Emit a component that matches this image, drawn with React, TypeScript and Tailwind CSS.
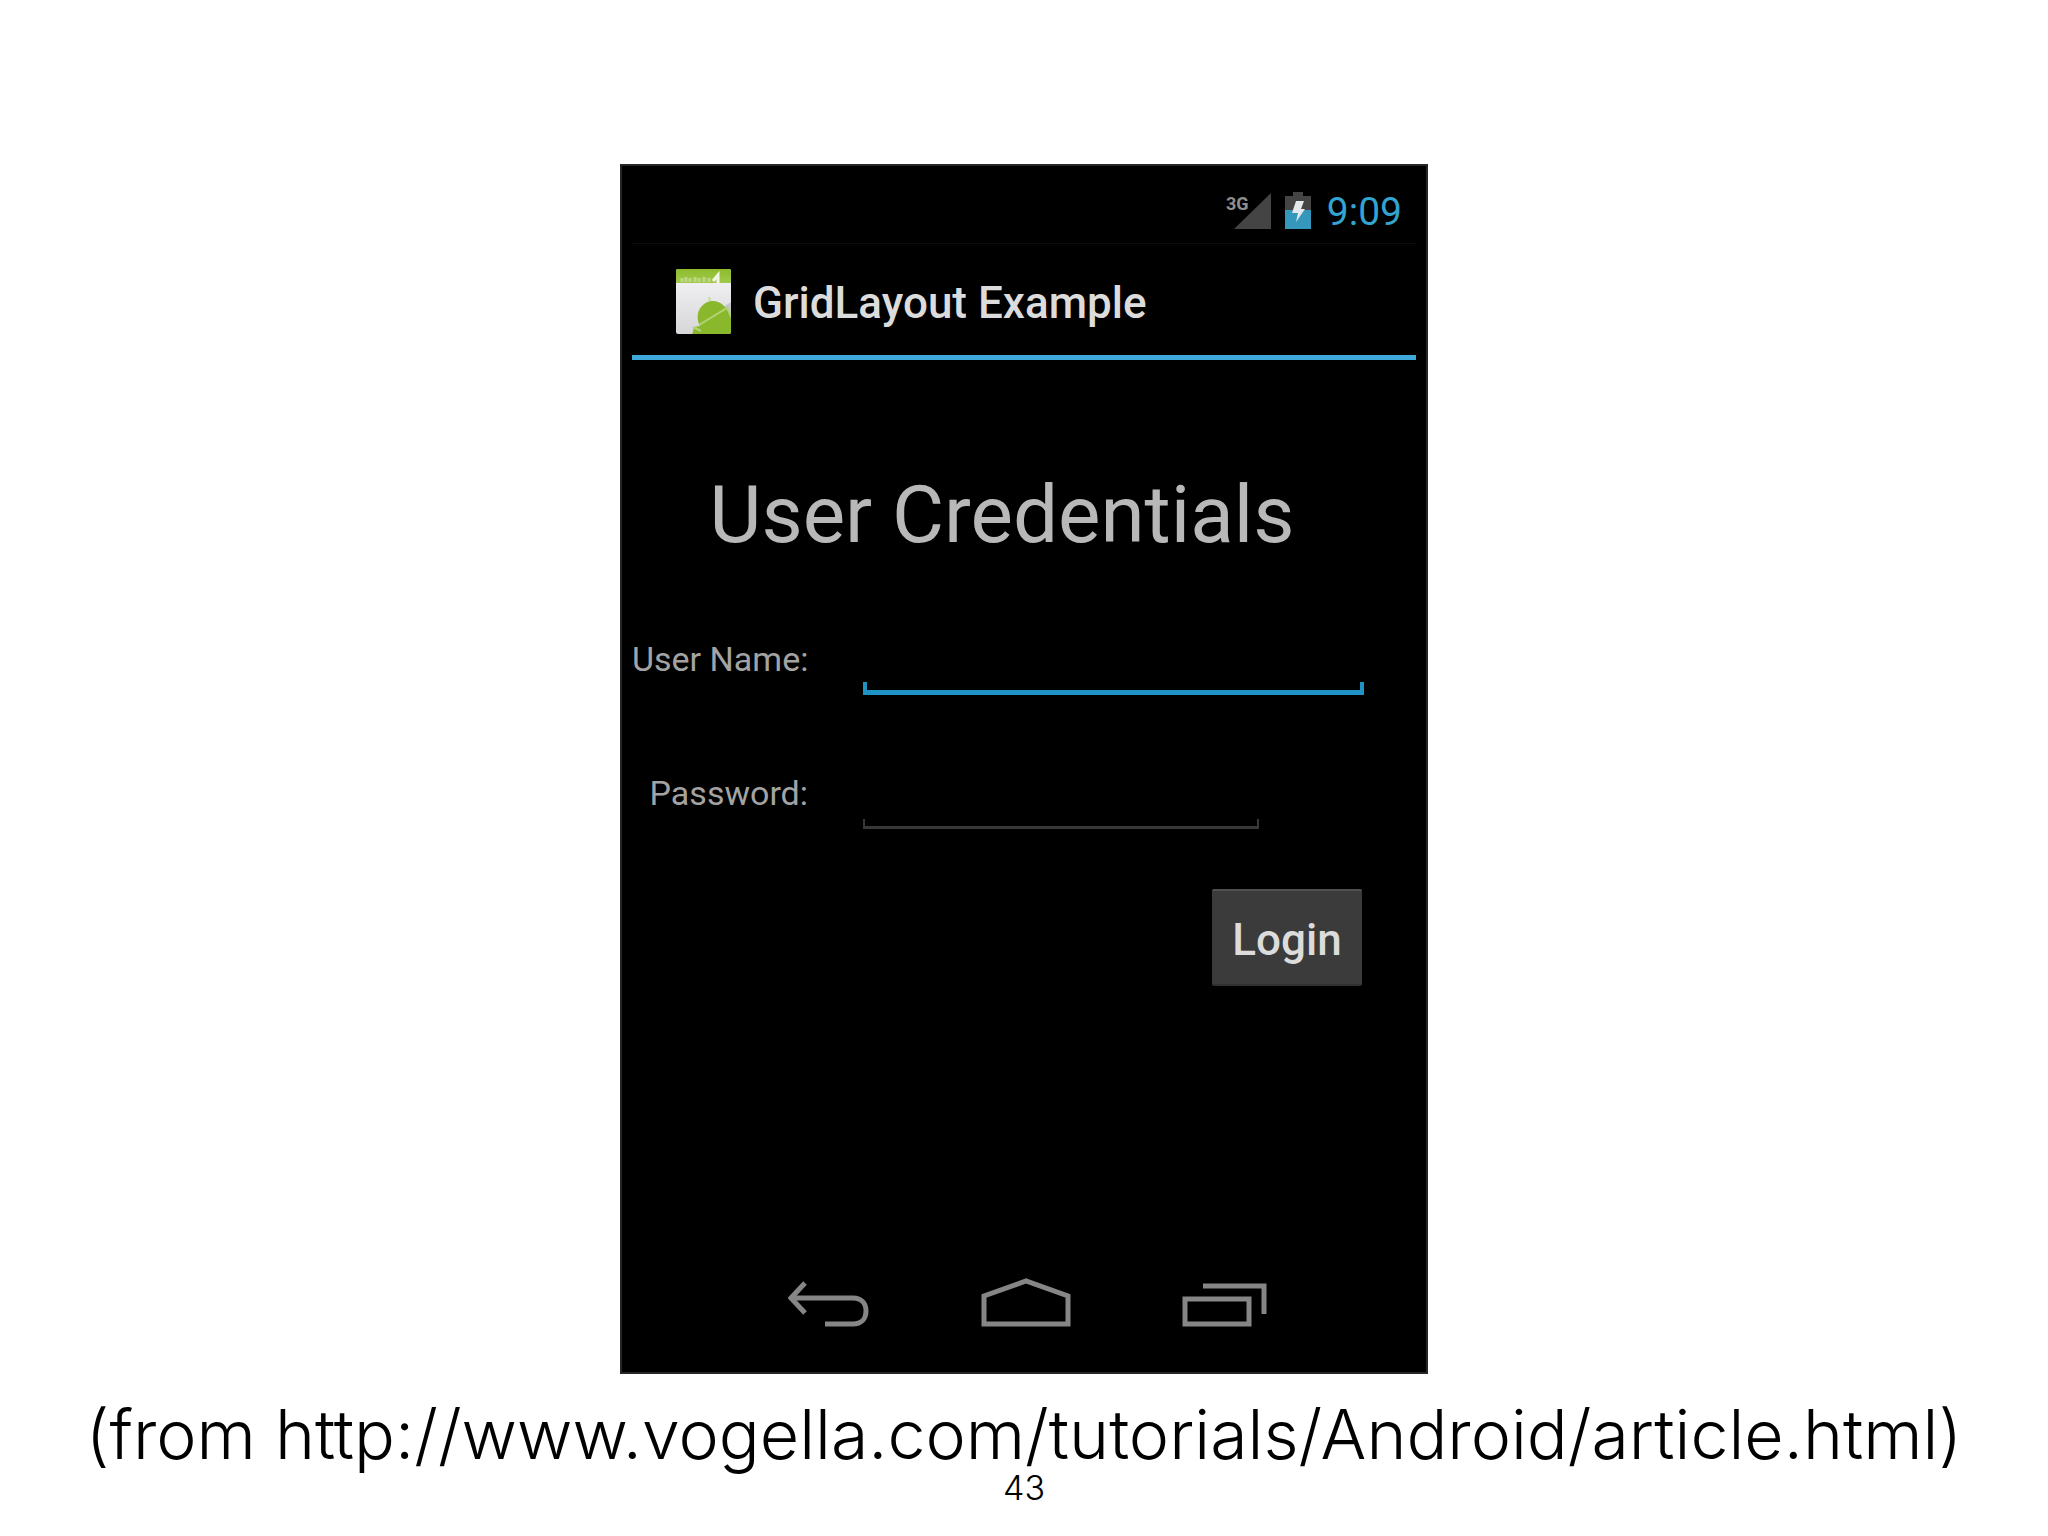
import React from "react";

function SignalIcon() {
  return (
    <svg width="48" height="40" viewBox="0 0 48 40" role="img" aria-label="3G signal">
      <path d="M46 1V37H9Z" fill="#444" />
      <text x="1" y="18" fill="#8f8f8f" fontFamily="Roboto, sans-serif" fontWeight="700" fontSize="18">
        3G
      </text>
    </svg>
  );
}

function BatteryIcon() {
  return (
    <svg width="26" height="40" viewBox="0 0 26 40" role="img" aria-label="Battery charging">
      <path d="M8 0H18V4H26V19H0V4H8Z" fill="#444" />
      <path d="M0 18H26V37H0Z" fill="#3597bb" />
      <path d="M11 9L19 9L16 17L20 17L11 30L13 21L7 21Z" fill="#e4e8ea" />
    </svg>
  );
}

function AppIcon() {
  return (
    <svg width="55" height="66" viewBox="0 0 55 66" aria-hidden="true">
      <defs>
        <linearGradient id="paper" x1="0" y1="0" x2="0" y2="1">
          <stop offset="0" stopColor="#f6f5f8" />
          <stop offset="1" stopColor="#d6d6d8" />
        </linearGradient>
        <linearGradient id="band" x1="0" y1="0" x2="0" y2="1">
          <stop offset="0" stopColor="#8dbb2c" />
          <stop offset="1" stopColor="#a2c94f" />
        </linearGradient>
        <clipPath id="card">
          <rect width="55" height="65" rx="2" />
        </clipPath>
      </defs>
      <g clipPath="url(#card)">
        <rect width="55" height="66" fill="url(#paper)" />
        <rect width="55" height="14" fill="url(#band)" />
        <path d="M6 13V9M10 13V8M14 13V9M19 13V8M23 13V9M28 13V8M33 13V9" stroke="#bcd882" strokeWidth="3" />
        <path d="M37 12L42 6V14" stroke="#f2f7e4" strokeWidth="3" fill="none" />
        <path d="M47 38L55 33V48Z" fill="#c6c6ca" />
        <path d="M16 66L18 58L24 57C18 46 24 34 35 32C44 31 48 37 51 40L55 49V66Z" fill="#8ab82d" />
        <path d="M23 56L51 39L55 47" stroke="#b3d274" strokeWidth="2" fill="none" />
        <path d="M34 32L33 28" stroke="#c9dc9f" strokeWidth="2" />
        <path d="M17 58L25 62" stroke="#b3d274" strokeWidth="2" />
      </g>
    </svg>
  );
}

function BackIcon() {
  return (
    <svg width="82" height="50" viewBox="0 0 82 50" fill="none" stroke="#868686" strokeWidth="5" aria-hidden="true">
      <path d="M3 20H65C74 20 78 26 78 33C78 41 73 46 65 46H37" />
      <path d="M17 5L3 20L17 35" />
    </svg>
  );
}

function HomeIcon() {
  return (
    <svg width="90" height="50" viewBox="0 0 90 50" fill="none" stroke="#868686" strokeWidth="5" aria-hidden="true">
      <path d="M3 46V18L45 3L87 18V46Z" />
    </svg>
  );
}

function RecentsIcon() {
  return (
    <svg width="86" height="50" viewBox="0 0 86 50" fill="none" stroke="#868686" strokeWidth="5" aria-hidden="true">
      <path d="M3 21H67V46H3Z" />
      <path d="M21 8H82V36" />
    </svg>
  );
}

function Phone() {
  return (
    <main className="w-full max-w-[808px] border-2 border-[#262626] bg-black font-['Roboto',sans-serif]">
      <div className="mx-2.5">
        <div className="flex h-[78px] items-center justify-end border-b border-[#0d0d0d] pt-3.5 pr-3.5">
          <SignalIcon />
          <span className="ml-3 flex">
            <BatteryIcon />
          </span>
          <time className="ml-4 text-[39px] leading-[48px] text-[#33a3cf]">9:09</time>
        </div>
        <header className="flex h-[116px] items-center gap-[22px] border-b-5 border-[#3fa9db] pt-1 pl-11">
          <AppIcon />
          <p className="pt-0.5 text-[44px] leading-[48px] font-medium text-[#dcdcdc]">GridLayout Example</p>
        </header>
      </div>

      <form className="mt-[115px] pr-[54px] pl-2.5" onSubmit={(e) => e.preventDefault()}>
        <h1 className="text-center text-[80px] leading-[80px] text-[#b8b8b8]">User Credentials</h1>
        <div className="mt-[68px] grid grid-cols-[176px_1fr] gap-x-[55px] gap-y-[62px] pr-2">
          <label htmlFor="user" className="self-center text-right text-[34px] leading-[40px] whitespace-nowrap text-[#a3a3a3]">
            User Name:
          </label>
          <div className="flex h-[72px] flex-col">
            <input id="user" type="text" className="min-h-0 w-full flex-1 bg-transparent px-3 text-[34px] text-[#dcdcdc] outline-none" />
            <div className="h-[13px] border-x-4 border-b-5 border-[#1e93c4]" />
          </div>
          <label htmlFor="pass" className="self-center text-right text-[34px] leading-[40px] whitespace-nowrap text-[#a3a3a3]">
            Password:
          </label>
          <div className="mr-[105px] flex h-[72px] flex-col">
            <input id="pass" type="password" className="min-h-0 w-full flex-1 bg-transparent px-3 text-[34px] text-[#dcdcdc] outline-none" />
            <div className="h-2.5 border-x-2 border-b-3 border-[#383838]" />
          </div>
        </div>
        <div className="mt-[60px] flex justify-end pr-2.5">
          <button
            type="submit"
            className="h-[97px] w-[150px] rounded-xs border-t-2 border-b-2 border-t-[#505050] border-b-[#303030] bg-[#3b3b3b] pt-1 text-[44px] leading-[48px] font-medium text-[#dcdcdc]"
          >
            Login
          </button>
        </div>
      </form>

      <nav className="mt-[292px] flex items-end justify-center gap-[111px] pb-11 pl-[7px]">
        <button type="button" aria-label="Back">
          <BackIcon />
        </button>
        <button type="button" aria-label="Home">
          <HomeIcon />
        </button>
        <button type="button" aria-label="Recent apps">
          <RecentsIcon />
        </button>
      </nav>
    </main>
  );
}

export default function App() {
  return (
    <div className="flex min-h-screen flex-col items-center bg-white pt-[164px] text-black">
      <Phone />
      <p className="mt-6 text-center font-['Inter',sans-serif] text-[68px] leading-[72px] font-light">
        (from{" "}
        <a href="http://www.vogella.com/tutorials/Android/article.html">
          http://www.vogella.com/tutorials/Android/article.html
        </a>
        )
      </p>
      <p className="font-['Inter',sans-serif] text-[34px] leading-[36px] font-light">43</p>
    </div>
  );
}
